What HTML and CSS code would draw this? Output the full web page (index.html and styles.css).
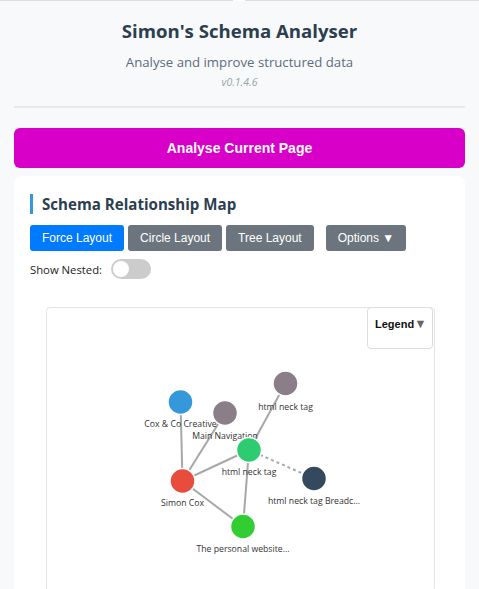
FILE: index.html
```html
<!DOCTYPE html>
<html>
<head>
<meta charset="utf-8">
<link rel="stylesheet" href="styles.css">
</head>
<body>
<div class="frame">
  <span class="notch"></span>
  <header class="header">
    <h1 class="title">Simon's Schema Analyser</h1>
    <p class="subtitle">Analyse and improve structured data</p>
    <p class="version">v0.1.4.6</p>
  </header>
  <hr class="divider">
  <button class="analyse-btn">Analyse Current Page</button>
  <section class="card">
    <h2 class="card-title">Schema Relationship Map</h2>
    <div class="controls">
      <button class="ctl active">Force Layout</button>
      <button class="ctl">Circle Layout</button>
      <button class="ctl">Tree Layout</button>
      <button class="ctl options">Options ▼</button>
    </div>
    <div class="toggle-row">
      <span class="toggle-label">Show Nested:</span>
      <span class="toggle"><span class="knob"></span></span>
    </div>
    <div class="graph">
      <div class="legend">Legend<span class="caret">▼</span></div>
      <svg class="graph-svg" width="386" height="280" viewBox="0 0 386 280">
        <g class="links">
          <line x1="133.5" y1="94" x2="135.5" y2="173"/>
          <line x1="178" y1="105" x2="135.5" y2="173"/>
          <line x1="238.5" y1="75.5" x2="202" y2="142"/>
          <line x1="135.5" y1="173" x2="202" y2="142"/>
          <line x1="202" y1="142" x2="196" y2="218.5"/>
          <line x1="135.5" y1="173" x2="196" y2="218.5"/>
          <line class="dashed" x1="202" y1="142" x2="267" y2="170.5"/>
        </g>
        <g class="nodes">
          <circle cx="133.5" cy="94" r="12.5" fill="#3498db"/>
          <text x="133.5" y="119">Cox &amp; Co Creative</text>
          <circle cx="178" cy="105" r="12.5" fill="#8c7e89"/>
          <text x="178" y="131">Main Navigation</text>
          <circle cx="238.5" cy="75.5" r="12.5" fill="#8c7e89"/>
          <text x="238.5" y="101.5">html neck tag</text>
          <circle cx="202" cy="142" r="12.5" fill="#2ecc71"/>
          <text x="202" y="167">html neck tag</text>
          <circle cx="267" cy="170.5" r="12.5" fill="#34495e"/>
          <text x="267" y="196">html neck tag Breadc...</text>
          <circle cx="135.5" cy="173" r="12.5" fill="#e74c3c"/>
          <text x="135.5" y="198">Simon Cox</text>
          <circle cx="196" cy="218.5" r="12.5" fill="#32cd32"/>
          <text x="196" y="244">The personal website...</text>
        </g>
      </svg>
    </div>
  </section>
</div>
</body>
</html>
```
FILE: styles.css
```css
* { box-sizing: border-box; }
html, body {
  margin: 0;
  padding: 0;
  background: #f8f9fa;
}
body {
  font-family: "Open Sans", "Noto Sans", sans-serif;
  color: #2c3e50;
}
.frame {
  position: relative;
  border-top: 1px solid #dcdde0;
  padding: 0 14px;
  min-height: 589px;
}
.notch {
  position: absolute;
  top: -1px;
  left: 233px;
  width: 12px;
  height: 1px;
  background: #ffffff;
}
.header {
  text-align: center;
  padding-top: 18px;
}
.title {
  margin: 0;
  font-size: 18.6px;
  line-height: 24px;
  font-weight: 700;
  color: #2c3e50;
}
.subtitle {
  margin: 9px 0 0;
  font-size: 13.2px;
  line-height: 20px;
  color: #5d6d7e;
}
.version {
  margin: 3px 0 0;
  font-size: 10.5px;
  line-height: 15px;
  font-style: italic;
  color: #95a5a6;
}
.divider {
  margin: 16px 0 0;
  border: 0;
  height: 2px;
  background: #e6e8eb;
}
.analyse-btn {
  display: block;
  width: 100%;
  margin-top: 20px;
  height: 40px;
  border: 0;
  border-radius: 6px;
  background: #d800c8;
  color: #ffffff;
  font-family: "Liberation Sans", Arial, sans-serif;
  font-weight: 700;
  font-size: 14px;
}
.card {
  margin-top: 8px;
  background: #ffffff;
  border-radius: 8px;
  padding: 18px 16px 0;
  height: 420px;
}
.card-title {
  margin: 0;
  font-size: 15.1px;
  line-height: 20px;
  font-weight: 700;
  color: #2c3e50;
  border-left: 3px solid #3498db;
  padding-left: 9px;
}
.controls {
  display: flex;
  gap: 4px;
  margin-top: 11px;
}
.ctl {
  height: 26px;
  border: 0;
  border-radius: 3px;
  background: #6c757d;
  color: #ffffff;
  font-family: "Liberation Sans", Arial, sans-serif;
  font-size: 12px;
  padding: 0 12px;
}
.ctl.active { background: #007bff; }
.ctl.options { margin-left: 8px; }
.toggle-row {
  display: flex;
  align-items: center;
  gap: 9px;
  margin-top: 8px;
  height: 20px;
}
.toggle-label {
  font-size: 11.3px;
  color: #222;
}
.toggle {
  position: relative;
  display: inline-block;
  width: 40px;
  height: 20px;
  border-radius: 10px;
  background: #cccccc;
}
.knob {
  position: absolute;
  left: 2px;
  top: 2px;
  width: 16px;
  height: 16px;
  border-radius: 50%;
  background: #ffffff;
}
.graph {
  position: relative;
  margin: 28px 14px 0 16px;
  height: 285px;
  border: 1px solid #e3e5e8;
  border-radius: 4px;
  background: #ffffff;
}
.graph-svg { display: block; }
.legend {
  position: absolute;
  top: -1px;
  right: 1px;
  width: 66px;
  height: 42px;
  background: #ffffff;
  border: 1px solid #dcdde0;
  border-radius: 4px;
  padding-top: 9px;
  padding-left: 7px;
  font-family: "Liberation Sans", Arial, sans-serif;
  font-size: 11px;
  font-weight: 700;
  color: #111;
}
.caret {
  color: #666;
  font-size: 12.5px;
}
.links line {
  stroke: #999;
  stroke-width: 2;
  stroke-opacity: 0.85;
}
.links line.dashed { stroke-dasharray: 3 3; }
.nodes circle {
  stroke: #ffffff;
  stroke-width: 1.5;
}
.nodes text {
  font-family: "Open Sans", "Noto Sans", sans-serif;
  font-size: 8.7px;
  fill: #333;
  text-anchor: middle;
}
```
